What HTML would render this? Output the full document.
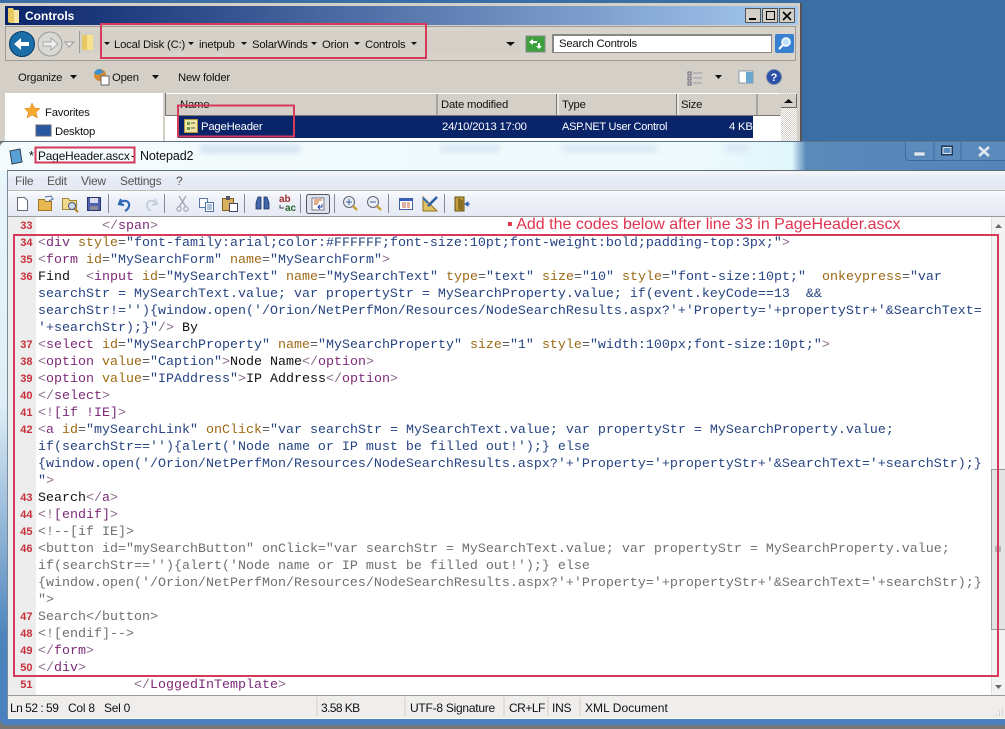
<!DOCTYPE html>
<html><head><meta charset="utf-8"><style>
html,body{margin:0;padding:0;width:1005px;height:729px;overflow:hidden;background:#3a6ea5}
div{position:absolute}
.s{font:11.3px "Liberation Sans",sans-serif;color:#111;white-space:pre;line-height:18px;letter-spacing:-.2px}
.m{font-size:12px;letter-spacing:-.25px;line-height:16px}
#code{left:38px;top:218px;font:13.33px/17px "Liberation Mono",monospace;white-space:pre;color:#555;width:960px;height:476px;overflow:hidden}
#nums{left:8px;top:218px;width:24.5px;text-align:right;font:bold 11px/17px "Liberation Sans",sans-serif;color:#c8303c}
.t{color:#7c2a78}.b{color:#8a6a8a}.a{color:#9c6a14}.v{color:#264482}.k{color:#111}.c{color:#707070}
</style></head><body>

<div style="left:0;top:3px;width:800px;height:140px;background:#d4d0c8;border-right:2px solid #555"></div>
<div style="left:5px;top:6px;width:793px;height:19px;background:linear-gradient(90deg,#0a246a,#a6caf0)"></div>
<div class="s m" style="left:25px;top:8px;color:#fff;font-weight:bold;font-size:12px;letter-spacing:0">Controls</div>
<div style="left:5px;top:26px;width:789px;height:33px;border:1px solid #a09c94;background:#d8d4cc"></div>
<div style="left:79px;top:31px;width:440px;height:22px;background:#d4d0c8;border-left:1px solid #999"></div>
<div class="s" style="left:114px;top:36px">Local Disk (C:)</div>
<div class="s" style="left:199px;top:36px">inetpub</div>
<div class="s" style="left:252px;top:36px">SolarWinds</div>
<div class="s" style="left:322px;top:36px">Orion</div>
<div class="s" style="left:365px;top:36px">Controls</div>
<div style="left:552px;top:34px;width:217px;height:16px;background:#fff;border:1px solid #888;border-width:2px 1px 1px 2px"></div>
<div class="s" style="left:559px;top:35px">Search Controls</div>
<div class="s" style="left:18px;top:69px">Organize</div>
<div class="s" style="left:112px;top:69px">Open</div>
<div class="s" style="left:178px;top:69px">New folder</div>

<div style="left:5px;top:93px;width:158px;height:48px;background:#fff"></div>
<div class="s" style="left:45px;top:104px">Favorites</div>
<div class="s" style="left:55px;top:123px">Desktop</div>
<div style="left:165px;top:93px;width:615px;height:22px;background:#d4d0c8;border-bottom:1px solid #777"></div>
<div style="left:165px;top:116px;width:616px;height:25px;background:#fff"></div>
<div style="left:178px;top:116px;width:575px;height:22px;background:#0a246a"></div>
<div class="s" style="left:180px;top:96px">Name</div>
<div class="s" style="left:441px;top:96px">Date modified</div>
<div class="s" style="left:562px;top:96px">Type</div>
<div class="s" style="left:681px;top:96px">Size</div>
<div class="s" style="left:201px;top:118px;color:#fff">PageHeader</div>
<div class="s" style="left:442px;top:118px;color:#fff">24/10/2013 17:00</div>
<div class="s" style="left:562px;top:118px;color:#fff;font-size:11px;letter-spacing:-.25px">ASP.NET User Control</div>
<div class="s" style="left:729px;top:118px;color:#fff">4 KB</div>
<div style="left:781px;top:93px;width:16px;height:48px;background:repeating-conic-gradient(#d4d0c8 0 25%,#fff 0 50%) 0 0/2px 2px"></div>
<div style="left:781px;top:94px;width:16px;height:14px;background:#d4d0c8;border:1px solid #666;border-width:0 1px 1px 0;box-sizing:border-box"></div>

<div style="left:0;top:141px;width:1005px;height:588px;background:#777;overflow:hidden">
  <div style="left:0;top:1px;width:1005px;height:583px;background:linear-gradient(180deg,#eaf6fa 0,#dfeef6 45%,#4d84bc 85%,#4a80c0 100%);border-radius:5px 0 0 6px"></div>
  <div style="left:0;top:1px;width:1005px;height:29px;border-radius:5px 0 0 0;background:linear-gradient(90deg,#f4fbfd 0,#eefafc 700px,#dff6fb 792px,#5a8aba 806px,#5585b8 100%)"></div>
  <div style="left:200px;top:4px;width:100px;height:8px;background:#d2e2f2;filter:blur(3px)"></div>
  <div style="left:440px;top:4px;width:60px;height:7px;background:#d8e6f4;filter:blur(3px)"></div>
  <div style="left:562px;top:4px;width:95px;height:7px;background:#d8e6f4;filter:blur(3px)"></div>
  <div style="left:725px;top:4px;width:25px;height:7px;background:#d8e6f4;filter:blur(3px)"></div>
  <div style="left:905px;top:0;width:100px;height:20px;background:#5b8abd;border:1px solid #3d6a9c;border-top:0;border-right:0;border-radius:0 0 0 4px;box-sizing:border-box"></div>
  <div style="left:0;top:0;width:1005px;height:1px;background:#5f7488"></div>
</div>
<div class="s m" style="left:29px;top:148px;font-size:12.5px;letter-spacing:0">*</div>
<div class="s m" style="left:38px;top:148px;font-size:11.8px;letter-spacing:-.1px">PageHeader.ascx</div>
<div class="s m" style="left:131px;top:148px;font-size:12.5px;letter-spacing:0">-</div>
<div class="s m" style="left:140px;top:148px;font-size:12.5px;letter-spacing:-.1px">Notepad2</div>

<div style="left:7px;top:170px;width:998px;height:548px;background:#fff;border-left:1px solid #7a8a9a;border-top:1px solid #606a72;box-sizing:border-box"></div>
<div style="left:8px;top:171px;width:997px;height:19px;background:linear-gradient(180deg,#f5f8fb 0,#e6eaf4 40%,#e6eaf4 100%);border-bottom:1px solid #bbb"></div>
<div class="s m" style="left:15px;top:173px;color:#555">File</div>
<div class="s m" style="left:47px;top:173px;color:#555">Edit</div>
<div class="s m" style="left:81px;top:173px;color:#555">View</div>
<div class="s m" style="left:120px;top:173px;color:#555">Settings</div>
<div class="s m" style="left:176px;top:173px;color:#555">?</div>
<div style="left:8px;top:191px;width:997px;height:25px;background:linear-gradient(180deg,#fafbfd 0,#eef1f8 30%,#e6eaf4 100%);border-bottom:1px solid #999"></div>

<div style="left:8px;top:217px;width:28px;height:478px;background:#ededed"></div>
<div id="nums"><span>33</span><br>34<br>35<br>36<br><br><br><br>37<br>38<br>39<br>40<br>41<br>42<br><br><br><br>43<br>44<br>45<br>46<br><br><br><br>47<br>48<br>49<br>50<br>51</div>
<div id="code">        <span class="b">&lt;/</span><span class="t">span</span><span class="b">&gt;</span>
<span class="b">&lt;</span><span class="t">div</span> <span class="a">style</span>=<span class="v">"font-family:arial;color:#FFFFFF;font-size:10pt;font-weight:bold;padding-top:3px;"</span><span class="b">&gt;</span>
<span class="b">&lt;</span><span class="t">form</span> <span class="a">id</span>=<span class="v">"MySearchForm"</span> <span class="a">name</span>=<span class="v">"MySearchForm"</span><span class="b">&gt;</span>
<span class="k">Find</span>  <span class="b">&lt;</span><span class="t">input</span> <span class="a">id</span>=<span class="v">"MySearchText"</span> <span class="a">name</span>=<span class="v">"MySearchText"</span> <span class="a">type</span>=<span class="v">"text"</span> <span class="a">size</span>=<span class="v">"10"</span> <span class="a">style</span>=<span class="v">"font-size:10pt;"</span>  <span class="a">onkeypress</span>=<span class="v">"var
searchStr = MySearchText.value; var propertyStr = MySearchProperty.value; if(event.keyCode==13  &amp;&amp;
searchStr!=''){window.open('/Orion/NetPerfMon/Resources/NodeSearchResults.aspx?'+'Property='+propertyStr+'&amp;SearchText=
'+searchStr);}"</span><span class="b">/&gt;</span> <span class="k">By</span>
<span class="b">&lt;</span><span class="t">select</span> <span class="a">id</span>=<span class="v">"MySearchProperty"</span> <span class="a">name</span>=<span class="v">"MySearchProperty"</span> <span class="a">size</span>=<span class="v">"1"</span> <span class="a">style</span>=<span class="v">"width:100px;font-size:10pt;"</span><span class="b">&gt;</span>
<span class="b">&lt;</span><span class="t">option</span> <span class="a">value</span>=<span class="v">"Caption"</span><span class="b">&gt;</span><span class="k">Node Name</span><span class="b">&lt;/</span><span class="t">option</span><span class="b">&gt;</span>
<span class="b">&lt;</span><span class="t">option</span> <span class="a">value</span>=<span class="v">"IPAddress"</span><span class="b">&gt;</span><span class="k">IP Address</span><span class="b">&lt;/</span><span class="t">option</span><span class="b">&gt;</span>
<span class="b">&lt;/</span><span class="t">select</span><span class="b">&gt;</span>
<span class="b">&lt;!</span><span class="t">[if !IE]</span><span class="b">&gt;</span>
<span class="b">&lt;</span><span class="t">a</span> <span class="a">id</span>=<span class="v">"mySearchLink"</span> <span class="a">onClick</span>=<span class="v">"var searchStr = MySearchText.value; var propertyStr = MySearchProperty.value;
if(searchStr==''){alert('Node name or IP must be filled out!');} else
{window.open('/Orion/NetPerfMon/Resources/NodeSearchResults.aspx?'+'Property='+propertyStr+'&amp;SearchText='+searchStr);}
"</span><span class="b">&gt;</span>
<span class="k">Search</span><span class="b">&lt;/</span><span class="t">a</span><span class="b">&gt;</span>
<span class="b">&lt;!</span><span class="t">[endif]</span><span class="b">&gt;</span>
<span class="c">&lt;!--[if IE]&gt;
&lt;button id="mySearchButton" onClick="var searchStr = MySearchText.value; var propertyStr = MySearchProperty.value;
if(searchStr==''){alert('Node name or IP must be filled out!');} else
{window.open('/Orion/NetPerfMon/Resources/NodeSearchResults.aspx?'+'Property='+propertyStr+'&amp;SearchText='+searchStr);}
"&gt;
Search&lt;/button&gt;
&lt;![endif]--&gt;</span>
<span class="b">&lt;/</span><span class="t">form</span><span class="b">&gt;</span>
<span class="b">&lt;/</span><span class="t">div</span><span class="b">&gt;</span>
            <span class="b">&lt;/</span><span class="t">LoggedInTemplate</span><span class="b">&gt;</span></div>
<div style="left:991px;top:217px;width:14px;height:478px;background:#f3f3f3;border-left:1px solid #ddd;box-sizing:border-box"></div>
<div style="left:991px;top:469px;width:14px;height:161px;background:#e4e4e4;border:1px solid #999;border-right:0;box-sizing:border-box"></div>
<div class="s" style="left:507px;top:216px;font:16px/18px 'Liberation Sans',sans-serif;color:#e0334f;letter-spacing:0">▪ Add the codes below after line 33 in PageHeader.ascx</div>

<div style="left:8px;top:695px;width:997px;height:23px;background:#f0eeec;border-top:1px solid #999;box-sizing:border-box"></div>
<div class="s m" style="left:10px;top:700px;letter-spacing:-.5px">Ln 52 : 59</div>
<div class="s m" style="left:68px;top:700px">Col 8</div>
<div class="s m" style="left:104px;top:700px">Sel 0</div>
<div class="s m" style="left:321px;top:700px;letter-spacing:-.6px">3.58 KB</div>
<div class="s m" style="left:410px;top:700px">UTF-8 Signature</div>
<div class="s m" style="left:509px;top:700px;letter-spacing:-.5px">CR+LF</div>
<div class="s m" style="left:552px;top:700px">INS</div>
<div class="s m" style="left:585px;top:700px;letter-spacing:.05px">XML Document</div>
<div style="left:8px;top:718px;width:997px;height:1px;background:#fff"></div>

<svg width="1005" height="729" style="position:absolute;left:0;top:0" xmlns="http://www.w3.org/2000/svg">
<path d="M317 697V716M405 697V716M504 697V716M548 697V716M580 697V716" stroke="#d0ccc8"/>
<path d="M8 8h5l1 2h5v13H10l-2-1z" fill="#e8c860"/><path d="M14 10h5v13h-5z" fill="#f6e6a0"/>
<circle cx="22" cy="44" r="12.5" fill="#1c6ea8" stroke="#0a3c68"/><path d="M14 44l7-6v4h8v4h-8v4z" fill="#fff"/>
<circle cx="50" cy="44" r="12" fill="#d8d8d4" stroke="#999"/><path d="M58 44l-7-6v4h-8v4h8v4z" fill="#eee" stroke="#aaa"/>
<path d="M65 42l4 5 5-5z" fill="#eee" stroke="#999"/>
<path d="M82 35h11v15H82z" fill="#e8c860"/><path d="M87 35h6v15h-6z" fill="#f5e28a"/>
<path d="M104 42h6l-3 3zM188 42h6l-3 3zM241 42h6l-3 3zM311 42h6l-3 3zM354 42h6l-3 3zM411 42h6l-3 3zM506 42h9l-4.500 4zM70 75h7l-3.500 4zM152 75h7l-3.500 4zM715 75h7l-3.500 4z" fill="#111"/>
<rect x="526" y="36" width="19" height="16" fill="#3ca03c" stroke="#888"/><path d="M529 42l4-3v2h4v2h-4v2zM542 46l-3 3-3-3h2v-3h2v3z" fill="#fff"/>
<rect x="775" y="34" width="19" height="19" rx="2" fill="#3a80d0"/><circle cx="786" cy="42" r="4" fill="#bfe0ff" stroke="#fff" stroke-width="1.500"/><path d="M783 45l-4 4" stroke="#fff" stroke-width="2"/>
<circle cx="100" cy="75" r="6" fill="#d88a30"/><path d="M94 73a6 6 0 0 1 6-4l4 3-6 3z" fill="#3a90d0"/><rect x="101" y="76" width="8" height="9" fill="#fff" stroke="#666"/>
<path d="M688 72h3v3h-3zM688 77h3v3h-3zM688 82h3v3h-3z" fill="none" stroke="#667"/><path d="M693 73h9M693 78h9M693 83h9" stroke="#99a" />
<rect x="739" y="71" width="14" height="12" fill="#fff" stroke="#89a"/><rect x="746" y="72" width="7" height="11" fill="#6aa8d0"/>
<circle cx="774" cy="77" r="7.500" fill="#2a50a8" stroke="#8090b0"/><text x="774" y="81" text-anchor="middle" font-family="Liberation Sans" font-size="11" font-weight="bold" fill="#fff">?</text>
<path d="M784 103h9l-4.500-4z" fill="#111"/>
<path d="M32 103l2.500 5 5.500.5-4 4 1.500 5.500-5.500-3-5 3 1.500-5.500-4-4 5.500-.5z" fill="#f4a830" stroke="#d08020" stroke-width=".5"/>
<rect x="36" y="125" width="15" height="11" fill="#2858a0" stroke="#667"/>
<rect x="184.500" y="119.500" width="13" height="13" fill="#f0e6a0" stroke="#b09840"/><path d="M187 122h3v3h-3zM187 127h3v3h-3z" fill="#6a9a50"/><path d="M191 123h4M191 128h4" stroke="#555"/>
<path d="M165.500 93v22M437 93v22M556.500 93v22M676.500 93v22M757 93v22" stroke="#777"/>
<path d="M166 93.500h614M558 94v21M678 94v21" stroke="#fff"/>
<path d="M10 151l10-2 2 13-10 2z" fill="#5aa0d8" stroke="#345"/>
<rect x="745.500" y="8.500" width="15" height="14" fill="#d4d0c8" stroke="#555"/><rect x="762.500" y="8.500" width="15" height="14" fill="#d4d0c8" stroke="#555"/><rect x="779.500" y="8.500" width="15" height="14" fill="#d4d0c8" stroke="#555"/>
<path d="M749 19h7" stroke="#000" stroke-width="2"/><rect x="766.500" y="11.500" width="8" height="8" fill="none" stroke="#000"/><path d="M783 12l8 8M791 12l-8 8" stroke="#000" stroke-width="1.600"/>
<rect x="914" y="152" width="11" height="4" fill="#dde8f2" stroke="#4a6a88" stroke-width=".5"/>
<rect x="942" y="146.500" width="10" height="8" fill="none" stroke="#1c3858" stroke-width="2"/><rect x="943" y="147.500" width="8" height="6" fill="none" stroke="#dde8f2"/>
<path d="M979 147l10 9M989 147l-10 9" stroke="#dde8f2" stroke-width="2.600"/>
<path d="M934 142v19M961 142v19" stroke="#3d6a9c"/>
<path d="M17.500 197.500h7l3 3v10h-10z" fill="#fff" stroke="#667"/>
<path d="M38.500 199.500h6l1 2h6v9h-13z" fill="#e8b850" stroke="#a07820"/><path d="M45 197l6-1 2 3-4 2" fill="none" stroke="#5070a0"/>
<path d="M62.500 198.500h6l1 2h7v9h-14z" fill="#f0d890" stroke="#a08830"/><circle cx="72" cy="206" r="3.500" fill="#cde" stroke="#557"/><path d="M75 209l3 3" stroke="#b08020" stroke-width="2"/>
<rect x="87.500" y="197.500" width="13" height="13" fill="#5060b0" stroke="#2a3468"/><rect x="90" y="198" width="8" height="5" fill="#dde"/><rect x="90" y="206" width="8" height="4" fill="#889"/>
<path d="M108.500 194v19M164.500 194v19M244.500 194v19M300.500 194v19M334.500 194v19M388.500 194v19M444.500 194v19" stroke="#889"/>
<path d="M121 199l-2 5 5 1M120 203c4-4 10-2 9 3-.500 2-2 4-4 5" fill="none" stroke="#3068b8" stroke-width="2.200"/>
<path d="M155 199l2 5-5 1M156 203c-4-4-10-2-9 3 .500 2 2 4 4 5" fill="none" stroke="#c4d0dc" stroke-width="2"/>
<path d="M179 196l7 11M186 196l-7 11" stroke="#a0a8b0" stroke-width="1.300"/><circle cx="179" cy="209" r="2.200" fill="none" stroke="#99a"/><circle cx="186" cy="209" r="2.200" fill="none" stroke="#99a"/>
<rect x="199.500" y="198.500" width="8" height="9" fill="#fff" stroke="#5878a8"/><rect x="205.500" y="202.500" width="8" height="9" fill="#fff" stroke="#4a70a8"/><path d="M207 205h5M207 207h5M207 209h5" stroke="#6080b0"/>
<rect x="222.500" y="198.500" width="11" height="12" fill="#d8b060" stroke="#806020"/><rect x="226" y="196" width="4" height="4" fill="#556"/><rect x="229.500" y="203.500" width="8" height="8" fill="#fff" stroke="#446"/>
<path d="M256 209v-6l2-6h3v12zM264 209v-12h3l2 6v6z" fill="#4068a8" stroke="#1c3468" stroke-width=".8"/>
<text x="279" y="202" font-family="Liberation Sans" font-size="10" font-weight="bold" fill="#a03030">ab</text><text x="285" y="211" font-family="Liberation Sans" font-size="10" font-weight="bold" fill="#2a6a30">ac</text><path d="M280 205v3h4" fill="none" stroke="#446"/>
<rect x="306.500" y="194.500" width="23" height="19" rx="2" fill="#dfe4ec" stroke="#556"/><rect x="312" y="198" width="12" height="12" fill="#fff" stroke="#778"/><path d="M314 200h8M314 202h5M314 204h4" stroke="#c06020"/><path d="M322 204v3h-4M320 205l-2 2 2 2" fill="none" stroke="#2040a0"/>
<circle cx="349" cy="202" r="5.500" fill="#e8eef4" stroke="#667"/><path d="M346 202h6M349 199v6" stroke="#3860a0"/><path d="M353 206l4 4" stroke="#c8a030" stroke-width="2.500"/>
<circle cx="373" cy="202" r="5.500" fill="#e8eef4" stroke="#667"/><path d="M370 202h6" stroke="#3860a0"/><path d="M377 206l4 4" stroke="#c8a030" stroke-width="2.500"/>
<rect x="399.500" y="198.500" width="13" height="11" fill="#fff" stroke="#4060a0"/><path d="M400 200h12" stroke="#3060c0" stroke-width="2"/><path d="M402 203h4M402 205h4M402 207h4M407 203h3M407 205h3M407 207h3" stroke="#c06040"/>
<path d="M423 211v-14l14 14z" fill="#e0c060" stroke="#907020"/><path d="M428 206l9-9" stroke="#2a5aa0" stroke-width="2.500"/><path d="M423 198l5 5" stroke="#3070c0" stroke-width="2"/>
<path d="M455 197h9v14h-9z" fill="#c8a040" stroke="#605010"/><path d="M458 198l5 2v11l-5-2z" fill="#8a7020"/><path d="M465 204h5M465 204l3-2v4z" fill="#3060b0" stroke="#3060b0"/>
<path d="M995 228h7l-3.500-4zM995 685h7l-3.500 4z" fill="#666"/>
<path d="M995 547h6M995 549h6M995 551h6" stroke="#888"/>
<path d="M999 712h1M996 715h1M999 715h1M1002 709h1M1002 712h1M1002 715h1" stroke="#aaa"/>
<g fill="none" stroke="#d63a5a" stroke-width="2">
<rect x="101" y="24" width="325" height="34"/>
<rect x="178" y="105.500" width="116" height="31"/>
<rect x="35.500" y="147.500" width="99" height="15"/>
<rect x="14" y="235" width="984" height="441"/>
</g>
</svg>
</body></html>
